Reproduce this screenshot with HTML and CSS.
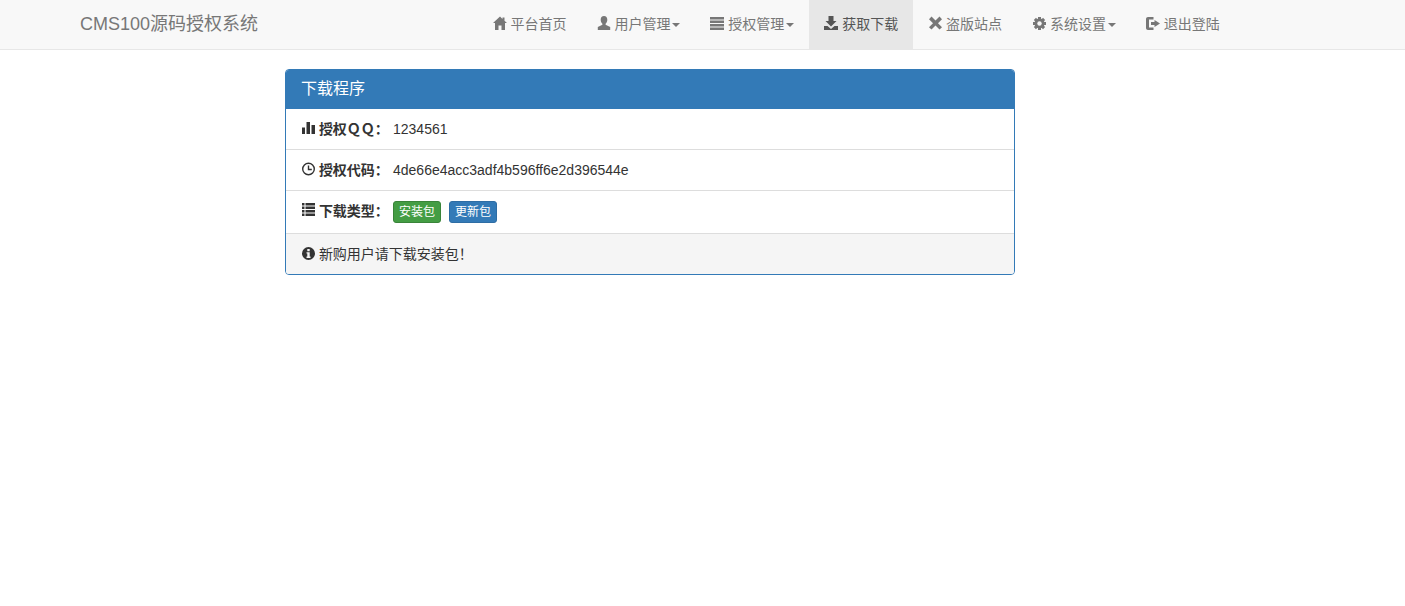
FILE: index.html
```html
<!DOCTYPE html>
<html lang="zh">
<head>
<meta charset="utf-8">
<title>下载程序</title>
<link rel="stylesheet" href="styles.css">
</head>
<body>
<nav class="navbar">
  <a class="brand" href="#">CMS100源码授权系统</a>
  <ul class="nav">
    <li><a href="#"><svg class="ico" viewBox="0 0 14 14"><path d="M7 .5 0 7h2v7h3.500V9.500h3V14H12V7h2l-2.500-2.300V1.500h-2v1.400z"/></svg>平台首页</a></li>
    <li><a href="#"><svg class="ico" viewBox="0 0 14 14"><path d="M7 0C4.800 0 3.700 1.700 3.700 3.800c0 1.700.7 3.100 1.700 3.900v1L.8 11v3h12.400v-3L8.600 8.700v-1c1-.8 1.700-2.200 1.700-3.900C10.300 1.700 9.200 0 7 0z"/></svg>用户管理<i class="caret"></i></a></li>
    <li><a href="#"><svg class="ico" viewBox="0 0 14 14"><path d="M0 1h14v2.500H0zM0 4.500h14V7H0zM0 8h14v2.500H0zM0 11.500h14V14H0z"/></svg>授权管理<i class="caret"></i></a></li>
    <li class="active"><a href="#"><svg class="ico" viewBox="0 0 14 14"><path d="M4.500 0h5v5h3L7 10.500 1.500 5h3zM0 10h3.500L7 13l3.500-3H14v4H0z"/></svg>获取下载</a></li>
    <li><a href="#"><svg class="ico" viewBox="0 0 14 14"><path d="M3.500 .5 7.500 4.500l4-4 2.500 2.800-4 4 4 4-2.500 2.200-4-4-4 4L1 11.300l4-4-4-4z"/></svg>盗版站点</a></li>
    <li><a href="#"><svg class="ico" viewBox="0 0 14 14"><g transform="translate(.5 0)"><circle cx="7" cy="7.500" r="5"/><rect x="5.500" y="1" width="3" height="13"/><rect x=".5" y="6" width="13" height="3"/><rect x="5.500" y="1" width="3" height="13" transform="rotate(45 7 7.500)"/><rect x="5.500" y="1" width="3" height="13" transform="rotate(135 7 7.500)"/><circle class="hole" cx="7" cy="7.500" r="2.200"/></g></svg>系统设置<i class="caret"></i></a></li>
    <li><a href="#"><svg class="ico" viewBox="0 0 14 14"><path d="M2 1h5.500v2.500H3v8h4.500V14H2c-1.100 0-2-.9-2-2V3c0-1.100.9-2 2-2zM8.500 4 14 7.500 8.500 11V9H5V6h3.500z"/></svg>退出登陆</a></li>
  </ul>
</nav>
<main class="panel">
  <h1 class="panel-heading">下载程序</h1>
  <div class="row">
    <strong class="label"><svg class="ico" viewBox="0 0 14 14"><path d="M1 6.500h3V13H1zM5.500 1H9v12H5.500zM10.500 4H14v9h-3.500z"/></svg>授权ＱＱ：</strong>
    <span>1234561</span>
  </div>
  <div class="row">
    <strong class="label"><svg class="ico" viewBox="0 0 14 14"><path fill-rule="evenodd" d="M7.500.5a6.500 6.500 0 1 1 0 13 6.500 6.500 0 0 1 0-13zm0 1.400a5.100 5.100 0 1 0 0 10.200 5.100 5.100 0 0 0 0-10.200zM6.800 3.500h1.400v3.300h2.600v1.400h-4z"/></svg>授权代码：</strong>
    <span>4de66e4acc3adf4b596ff6e2d396544e</span>
  </div>
  <div class="row row-btns">
    <strong class="label"><svg class="ico" viewBox="0 0 14 14"><path d="M1 0h2.500v2.500H1zM4.500 0H14v2.500H4.500zM1 3.500h2.500V6H1zM4.500 3.500H14V6H4.500zM1 7h2.500v2.500H1zM4.500 7H14v2.500H4.500zM1 10.500h2.500V13H1zM4.500 10.500H14V13H4.500z"/></svg>下载类型：</strong>
    <span class="btns"><a class="btn btn-green" href="#">安装包</a><a class="btn btn-blue" href="#">更新包</a></span>
  </div>
  <div class="panel-footer"><svg class="ico" viewBox="0 0 14 14"><path fill-rule="evenodd" d="M7.500 1a6.500 6.500 0 1 1 0 13 6.500 6.500 0 0 1 0-13zM6.300 3v2.200h2.400V3zM5.500 6.200v1.400h.8v2.900h-.8v1.400h4v-1.400h-.8V6.200z"/></svg>新购用户请下载安装包！</div>
</main>
</body>
</html>
```
FILE: styles.css
```css
* { box-sizing: border-box; }
body {
  margin: 0;
  font-family: "Liberation Sans", "Noto Sans CJK SC", sans-serif;
  font-size: 14px;
  line-height: 20px;
  color: #333;
  background: #fff;
}
a { text-decoration: none; }
.navbar {
  display: flex;
  justify-content: space-between;
  height: 50px;
  padding: 0 170.15px 0 65px;
  background: #f8f8f8;
  border-bottom: 1px solid #e7e7e7;
}
.brand {
  padding: 14px 15px;
  font-size: 18px;
  line-height: 20px;
  color: #777;
}
.nav {
  display: flex;
  margin: 0;
  padding: 0;
  list-style: none;
}
.nav a {
  display: block;
  height: 49px;
  padding: 14px 15px;
  color: #777;
}
.nav .ico { fill: #777; }
.nav .active a { background: #e7e7e7; color: #555; }
.nav .active .ico { fill: #555; }
.ico {
  display: inline-block;
  width: 14px;
  height: 14px;
  margin-right: 3.89px;
  vertical-align: -1px;
  fill: #333;
}
.nav .ico .hole { fill: #f8f8f8; }
.caret {
  display: inline-block;
  width: 0;
  height: 0;
  margin-left: 2px;
  vertical-align: middle;
  border-top: 4px solid;
  border-left: 4px solid transparent;
  border-right: 4px solid transparent;
}
.panel {
  width: 730px;
  margin: 19px 0 0 285px;
  background: #fff;
  border: 1px solid #337ab7;
  border-radius: 4px;
  overflow: hidden;
}
.panel-heading {
  margin: 0;
  height: 39px;
  padding: 9px 15px;
  font-size: 16px;
  font-weight: 400;
  line-height: 20px;
  color: #fff;
  background: #337ab7;
}
.row {
  display: flex;
  height: 41px;
  padding: 10px 15px;
  border-bottom: 1px solid #ddd;
}
.row-btns { height: 43px; }
.label { width: 92px; flex: none; }
.btns { display: flex; gap: 8px; }
.btn {
  height: 22px;
  padding: 1px 5px;
  font-size: 12px;
  line-height: 18px;
  color: #fff;
  border: 1px solid;
  border-radius: 3px;
}
.btn-green { background: #449d44; border-color: #398439; }
.btn-blue { background: #337ab7; border-color: #2e6da4; }
.panel-footer {
  height: 40px;
  padding: 10px 15px;
  background: #f5f5f5;
}
```
